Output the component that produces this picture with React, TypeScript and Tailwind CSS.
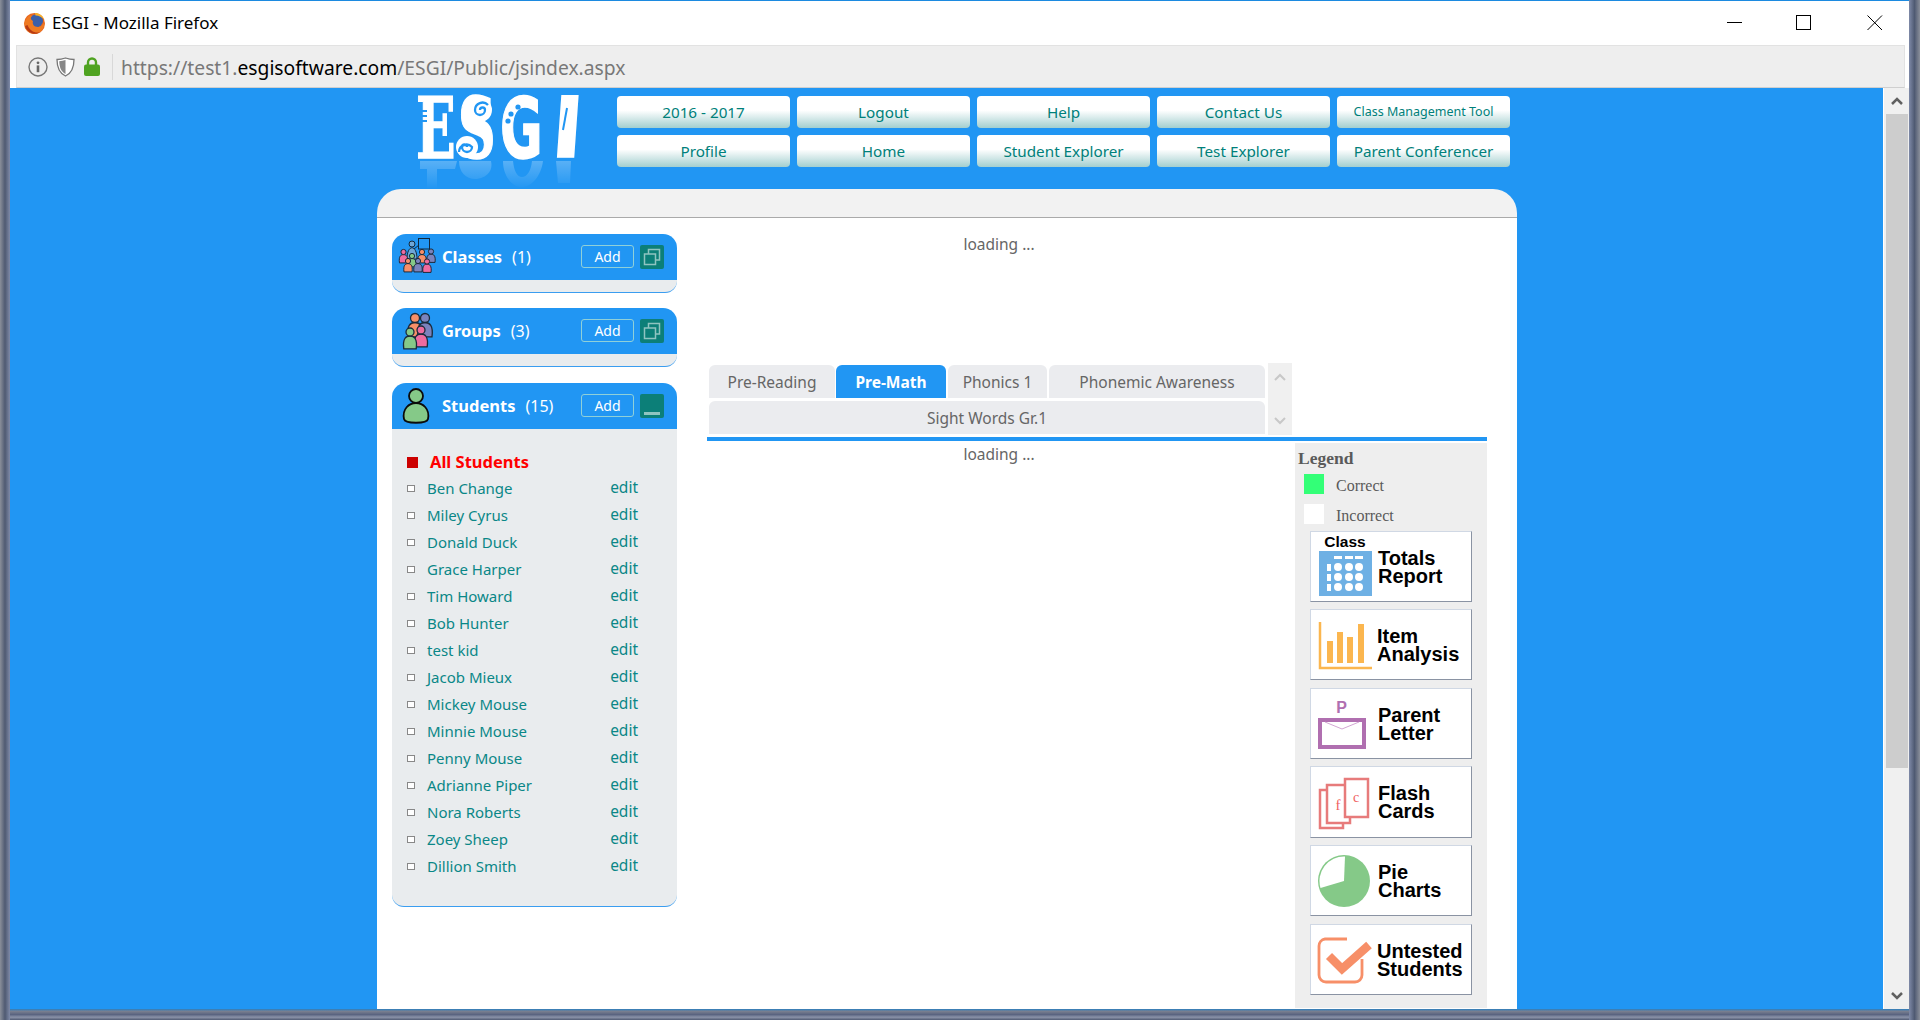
import React from "react";

const sans = "font-['Noto_Sans','Liberation_Sans',sans-serif]";

function Firefox() {
  return (
    <svg width="23" height="23" viewBox="0 0 23 23" className="shrink-0">
      <circle cx="11.500" cy="11.500" r="10.500" fill="#e8681f" />
      <ellipse cx="13" cy="9" rx="7" ry="6.500" fill="#3b5fa8" />
      <path d="M4 6 C6 3 8 3 9 4 C7 6 8 8 10 9 C9 12 11 15 15 15 C18 15 20 13 21.500 10 C22 16 17 22 11 22 C6 22 1.500 17 1.500 12 C1.500 10 2.500 8 4 6Z" fill="#ee7a22" />
      <path d="M2 14 C4 21 12 24 18 20 C12 22 7 19 4.500 13Z" fill="#b83a14" />
      <path d="M12 1 C16 1 20 3.500 21.500 8 C19 5 16 3.500 12.500 3.500Z" fill="#f7b02a" />
    </svg>
  );
}

function WindowControls() {
  return (
    <svg width="156" height="16" viewBox="0 0 156 16" className="shrink-0">
      <path d="M0 7.500H15" stroke="#000" strokeWidth="1" />
      <rect x="69.500" y="0.500" width="14" height="14" fill="none" stroke="#000" strokeWidth="1" />
      <path d="M140.500 0.500L155 15M155 0.500L140.500 15" stroke="#000" strokeWidth="1" />
    </svg>
  );
}

function InfoIcon() {
  return (
    <svg width="20" height="20" viewBox="0 0 20 20" className="shrink-0">
      <circle cx="10" cy="10" r="9" fill="none" stroke="#777" strokeWidth="1.400" />
      <circle cx="10" cy="5.800" r="1.400" fill="#666" />
      <rect x="8.700" y="8.400" width="2.600" height="6.800" fill="#666" />
    </svg>
  );
}

function ShieldIcon() {
  return (
    <svg width="19" height="20" viewBox="0 0 19 20" className="shrink-0">
      <path d="M9.500 1 C6.500 2 4 2.500 1 2.500 C1 10 3 16 9.500 19 C16 16 18 10 18 2.500 C15 2.500 12.500 2 9.500 1Z" fill="#fff" stroke="#777" strokeWidth="1.300" />
      <path d="M9.500 3 C7.500 3.700 5.500 4 3.200 4.200 C3.400 10 5 14.500 9.500 17Z" fill="#888" />
    </svg>
  );
}

function LockIcon() {
  return (
    <svg width="16" height="19" viewBox="0 0 16 19" className="shrink-0">
      <path d="M4 8V5.500A4 4 0 0 1 12 5.500V8" fill="none" stroke="#4fa321" strokeWidth="2.400" />
      <rect x="0" y="7.500" width="16" height="11.500" rx="2" fill="#4fa321" />
    </svg>
  );
}

function Logo() {
  return (
    <svg width="166" height="99" viewBox="0 0 166 99" className="shrink-0">
      <defs>
        <linearGradient id="logofade" gradientUnits="userSpaceOnUse" x1="0" y1="69" x2="0" y2="98">
          <stop offset="0" stopColor="#fff" stopOpacity="0.26" />
          <stop offset="1" stopColor="#fff" stopOpacity="0" />
        </linearGradient>
      </defs>
      <g fill="#fff" stroke="#fff" strokeWidth="1.500" fontWeight="700">
        <text transform="translate(1 67) scale(0.62 1)" fontSize="84" fontFamily="'DejaVu Serif',serif">E</text>
        <text transform="translate(43 67) scale(0.62 1)" fontSize="84" fontFamily="'DejaVu Serif',serif">S</text>
        <text transform="translate(85 67) scale(0.62 1)" fontSize="84" fontFamily="'DejaVu Sans',sans-serif">G</text>
        <text transform="translate(135 66) skewX(-4)" fontSize="84" fontFamily="'DejaVu Sans',sans-serif">I</text>
        <circle cx="65" cy="19" r="12" strokeWidth="0" />
        <circle cx="52" cy="56" r="11" strokeWidth="0" />
      </g>
      <g fill="url(#logofade)">
        <path d="M5 70H42L40 78H22V98H12V78H5Z" />
        <path d="M44 70H76C78 78 74 86 62 88C52 89 44 82 44 70Z" />
        <path d="M88 70H128C126 86 116 96 107 96C96 96 88 84 88 70ZM98 70C99 80 102 86 107 86C112 86 116 80 117 70Z" fillRule="evenodd" />
        <path d="M141 70H156L155 92H143Z" />
      </g>
      <path d="M3 20h9M3 25h9M3 30h9" stroke="#2196f3" strokeWidth="2" />
      <path d="M65 19a2.500 2.500 0 0 1 5 0a5 5 0 0 1 -10 0a7.500 7.500 0 0 1 13 -5" fill="none" stroke="#2196f3" strokeWidth="2.300" />
      <path d="M52 56a2.500 2.500 0 0 0 -5 0a5 5 0 0 0 10 0a7.500 7.500 0 0 0 -13 5" fill="none" stroke="#2196f3" strokeWidth="2.300" />
      <circle cx="103" cy="16" r="2.600" fill="#2196f3" />
      <circle cx="96" cy="23" r="2.600" fill="#2196f3" />
      <circle cx="93" cy="30" r="2.600" fill="#2196f3" />
      <path d="M152 17l-4 22" stroke="#2196f3" strokeWidth="2" />
    </svg>
  );
}

function Person({ x, y, r, fill, w }: { x: number; y: number; r: number; fill: string; w?: number }) {
  const sw = w ?? 1.300;
  return (
    <g stroke="#1b2a3a" strokeWidth={sw}>
      <path d={`M${x - r * 1.55} ${y + r * 4.2} C${x - r * 1.9} ${y + r * 1.6} ${x - r} ${y + r} ${x} ${y + r} C${x + r} ${y + r} ${x + r * 1.9} ${y + r * 1.6} ${x + r * 1.55} ${y + r * 4.2} Z`} fill={fill} />
      <circle cx={x} cy={y} r={r} fill={fill} />
    </g>
  );
}

function ClassesIcon() {
  return (
    <svg width="38" height="38" viewBox="0 0 38 38" className="shrink-0">
      <rect x="20.500" y="0.500" width="11" height="10.500" fill="none" stroke="#12283c" strokeWidth="1" />
      <path d="M16 11L21 7" stroke="#12283c" strokeWidth="1" />
      <circle cx="14" cy="6" r="3" fill="#6ea6d6" stroke="#12283c" strokeWidth="1" />
      <path d="M9 21C9 6 19 6 19 21Z" fill="#6ea6d6" stroke="#12283c" strokeWidth="1" />
      <Person x={5.500} y={14} r={2.600} fill="#ef6b9f" w={1} />
      <Person x={33} y={13.500} r={2.600} fill="#7b83bd" w={1} />
      <Person x={14} y={18} r={2.600} fill="#85c988" w={1} />
      <Person x={24} y={14} r={2.600} fill="#f78f68" w={1} />
      <Person x={10} y={23} r={2.600} fill="#f78f68" w={1} />
      <Person x={20} y={23} r={2.600} fill="#7b83bd" w={1} />
      <Person x={29} y={23.500} r={2.600} fill="#ef6b9f" w={1} />
    </svg>
  );
}

function GroupsIcon() {
  return (
    <svg width="38" height="38" viewBox="0 0 38 38" className="shrink-0">
      <Person x={17} y={6} r={4.500} fill="#f78f68" />
      <Person x={27} y={6} r={4.500} fill="#7b83bd" />
      <Person x={23} y={18} r={4} fill="#ef6b9f" />
      <Person x={12} y={20} r={4} fill="#85c988" />
    </svg>
  );
}

function StudentIcon() {
  return (
    <svg width="38" height="38" viewBox="0 0 38 38" className="shrink-0">
      <circle cx="18" cy="9" r="7" fill="#85c988" stroke="#0b0b0b" strokeWidth="1.800" />
      <path d="M6 32 C4 22 11 16 18 16 C25 16 32 22 30 32 C29 37 7 37 6 32Z" fill="#85c988" stroke="#0b0b0b" strokeWidth="1.800" />
    </svg>
  );
}

function CopyBtn() {
  return (
    <div className="w-[24px] h-[24px] rounded-[2px] bg-[#0c7f78] flex items-center justify-center shrink-0">
      <svg width="18" height="18" viewBox="0 0 18 18">
        <rect x="5.500" y="1.500" width="11" height="10.500" fill="none" stroke="#8fc4c0" strokeWidth="1.500" />
        <rect x="1.500" y="6" width="11" height="10.500" fill="#0c7f78" stroke="#8fc4c0" strokeWidth="1.500" />
      </svg>
    </div>
  );
}

function MinusBtn() {
  return (
    <div className="w-[24px] h-[24px] rounded-[2px] bg-[#0c7f78] flex items-end justify-center pb-[3px] shrink-0">
      <div className="w-[16px] h-[3px] bg-[#8fc4c0]" />
    </div>
  );
}

function PanelHeader({ icon, name, count, btn }: { icon: React.ReactNode; name: string; count: number; btn: React.ReactNode }) {
  return (
    <div className="h-[46px] bg-[#2196f3] rounded-t-[14px] flex items-center text-white">
      <div className="w-[50px] pl-[6px] shrink-0">{icon}</div>
      <span className={`${sans} text-[16.500px] font-bold leading-none`}>{name}</span>
      <span className={`${sans} text-[16px] leading-none ml-[10px]`}>({count})</span>
      <div className="flex-1" />
      <div className={`${sans} w-[53px] h-[23px] mb-[1px] rounded-[3px] border border-[#8fd0d8] flex items-center justify-center text-[14px] mr-[6px]`}>Add</div>
      <div className="mr-[13px]">{btn}</div>
    </div>
  );
}

function CollapsedPanel({ icon, name, count }: { icon: React.ReactNode; name: string; count: number }) {
  return (
    <div className="w-[285px]">
      <PanelHeader icon={icon} name={name} count={count} btn={<CopyBtn />} />
      <div className="h-[13px] bg-[#e9ecee] rounded-b-[12px] border-b border-[#3a9df0]" />
    </div>
  );
}

const students = [
  "Ben Change", "Miley Cyrus", "Donald Duck", "Grace Harper", "Tim Howard", "Bob Hunter", "test kid",
  "Jacob Mieux", "Mickey Mouse", "Minnie Mouse", "Penny Mouse", "Adrianne Piper", "Nora Roberts", "Zoey Sheep", "Dillion Smith",
];

function StudentsPanel() {
  return (
    <div className="w-[285px] mt-[1px]">
      <PanelHeader icon={<StudentIcon />} name="Students" count={15} btn={<MinusBtn />} />
      <div className="h-[478px] bg-[#e9ecee] rounded-b-[12px] border-b border-[#3a9df0] pt-[21px] pl-[15px] pr-[39px]">
        <div className="h-[25px] flex items-center">
          <div className="w-[11px] h-[11px] bg-[#cc0000] shrink-0" />
          <span className={`${sans} text-[16.500px] font-bold text-[#ff0000] ml-[12px] leading-none`}>All Students</span>
        </div>
        {students.map((s) => (
          <div key={s} className="h-[27px] flex items-center">
            <div className="w-[8px] h-[7px] bg-white border border-[#888] shrink-0" />
            <span className={`${sans} text-[15px] text-[#0a8787] ml-[12px] flex-1 leading-none`}>{s}</span>
            <span className={`${sans} text-[15.500px] text-[#0a8787] leading-none mb-[2px]`}>edit</span>
          </div>
        ))}
      </div>
    </div>
  );
}

function Tab({ w, label, active }: { w: string; label: string; active?: boolean }) {
  return (
    <div className={`${w} h-[33px] rounded-t-[6px] flex items-center justify-center pt-[3px] ${sans} text-[15.500px] ${active ? "bg-[#2196f3] text-white font-bold" : "bg-[#ebecef] text-[#666]"}`}>
      {label}
    </div>
  );
}

function ReportCard({ h, mb, icon, l1, l2, gap }: { h: string; mb: string; icon: React.ReactNode; l1: string; l2: string; gap: string }) {
  return (
    <div className={`${h} ${mb} w-[162px] bg-white border border-t-[#d0d8e4] border-l-[#d0d8e4] border-r-[#8a93a3] border-b-[#8a93a3] flex items-center pl-[4px]`}>
      {icon}
      <div className={`${gap} font-['Liberation_Sans',sans-serif] font-bold text-[20px] leading-[18px] text-black`}>
        <div>{l1}</div>
        <div>{l2}</div>
      </div>
    </div>
  );
}

function TotalsIcon() {
  const dots: React.ReactNode[] = [];
  [23, 34, 44].forEach((x) => [35, 45, 55].forEach((y) => dots.push(<circle key={`${x}-${y}`} cx={x} cy={y} r="4" fill="#fff" />)));
  return (
    <svg width="60" height="69" viewBox="0 0 60 69" className="shrink-0">
      <text x="30" y="15" textAnchor="middle" fontFamily="'Liberation Sans',sans-serif" fontWeight="700" fontSize="15.500" fill="#000">Class</text>
      <rect x="4" y="19" width="53" height="45" fill="#6eb0e4" />
      <rect x="19" y="24" width="8" height="3" fill="#fff" />
      <rect x="30" y="24" width="8" height="3" fill="#fff" />
      <rect x="40" y="24" width="8" height="3" fill="#fff" />
      <rect x="12" y="32" width="4" height="7" fill="#fff" />
      <rect x="12" y="42" width="4" height="7" fill="#fff" />
      <rect x="12" y="52" width="4" height="7" fill="#fff" />
      {dots}
    </svg>
  );
}

function ItemIcon() {
  return (
    <svg width="60" height="69" viewBox="0 0 60 69" className="shrink-0">
      <path d="M5 12V58H57" fill="none" stroke="#fbb64f" strokeWidth="2.500" />
      <rect x="12" y="31" width="6" height="22" fill="#fbb64f" />
      <rect x="22" y="22" width="6" height="31" fill="#fbb64f" />
      <rect x="32" y="27" width="6" height="26" fill="#fbb64f" />
      <rect x="43" y="14" width="6" height="39" fill="#fbb64f" />
    </svg>
  );
}

function LetterIcon() {
  return (
    <svg width="60" height="69" viewBox="0 0 60 69" className="shrink-0">
      <text x="26.500" y="24" textAnchor="middle" fontFamily="'Liberation Sans',sans-serif" fontWeight="700" fontSize="16" fill="#b06fb0">P</text>
      <rect x="5" y="31" width="44" height="27" fill="#fff" stroke="#b06fb0" strokeWidth="4" />
      <path d="M10 33L27 40L44 33" fill="none" stroke="#c88fc8" strokeWidth="0.800" />
    </svg>
  );
}

function FlashIcon() {
  return (
    <svg width="60" height="69" viewBox="0 0 60 69" className="shrink-0">
      <g fill="#fff" stroke="#e77b7b" strokeWidth="2.500">
        <rect x="5" y="22" width="23" height="38" />
        <rect x="12" y="17" width="23" height="38" />
        <rect x="30" y="11" width="23" height="38" />
      </g>
      <text x="23" y="42" textAnchor="middle" fontFamily="'Liberation Serif',serif" fontSize="15" fill="#f06060">f</text>
      <text x="41" y="34" textAnchor="middle" fontFamily="'Liberation Serif',serif" fontSize="14" fill="#f06060">c</text>
    </svg>
  );
}

function PieIcon() {
  return (
    <svg width="60" height="69" viewBox="0 0 60 69" className="shrink-0">
      <circle cx="29" cy="35" r="26" fill="#85c988" />
      <path d="M29 35L30 10.500A24.500 24.500 0 0 0 5.500 42Z" fill="#fff" />
    </svg>
  );
}

function CheckIcon() {
  return (
    <svg width="60" height="69" viewBox="0 0 60 69" className="shrink-0">
      <path d="M32 14H10A7 7 0 0 0 4 21V50A7 7 0 0 0 11 57H40A7 7 0 0 0 47 50V34" fill="none" stroke="#f78f68" strokeWidth="2.800" />
      <path d="M14 31L27 44L54 20" fill="none" stroke="#f78f68" strokeWidth="8.500" />
    </svg>
  );
}

function Legend() {
  return (
    <div className="w-[192px] mt-[2px] bg-[#eeeeee] shrink-0 h-[565px] pl-[3px]">
      <div className="font-['Liberation_Serif',serif] font-bold text-[17.500px] text-[#5a5a5a] leading-[18px] mt-[5px] pt-[1px] h-[18px]">Legend</div>
      <div className="flex items-center h-[20px] mt-[8px] ml-[6px]">
        <div className="w-[20px] h-[20px] bg-[#33ff77] shrink-0" />
        <span className="ml-[12px] mt-[3px] font-['Liberation_Serif',serif] text-[16px] leading-none text-[#5a5a5a]">Correct</span>
      </div>
      <div className="flex items-center h-[20px] mt-[10px] ml-[6px]">
        <div className="w-[20px] h-[20px] bg-white shrink-0" />
        <span className="ml-[12px] mt-[3px] font-['Liberation_Serif',serif] text-[16px] leading-none text-[#5a5a5a]">Incorrect</span>
      </div>
      <div className="ml-[12px] mt-[7px]">
        <ReportCard h="h-[71px]" mb="mb-[7px]" icon={<TotalsIcon />} l1="Totals" l2="Report" gap="ml-[3px]" />
        <ReportCard h="h-[71px]" mb="mb-[8px]" icon={<ItemIcon />} l1="Item" l2="Analysis" gap="ml-[2px]" />
        <ReportCard h="h-[71px]" mb="mb-[7px]" icon={<LetterIcon />} l1="Parent" l2="Letter" gap="ml-[3px]" />
        <ReportCard h="h-[72px]" mb="mb-[7px]" icon={<FlashIcon />} l1="Flash" l2="Cards" gap="ml-[3px]" />
        <ReportCard h="h-[71px]" mb="mb-[8px]" icon={<PieIcon />} l1="Pie" l2="Charts" gap="ml-[3px]" />
        <ReportCard h="h-[71px]" mb="mb-0" icon={<CheckIcon />} l1="Untested" l2="Students" gap="ml-[2px]" />
      </div>
    </div>
  );
}

const topButtons = ["2016 - 2017", "Logout", "Help", "Contact Us", "Class Management Tool", "Profile", "Home", "Student Explorer", "Test Explorer", "Parent Conferencer"];

function NavButton({ label }: { label: string }) {
  const small = label === "Class Management Tool";
  return (
    <div className={`h-[32px] rounded-[4px] bg-[linear-gradient(to_bottom,#ffffff_0%,#ffffff_45%,#a3cfcf_100%)] flex items-center justify-center text-[#00807a] ${sans} ${small ? "text-[12.500px]" : "text-[15.250px]"}`}>
      {label}
    </div>
  );
}

function Scrollbar() {
  return (
    <div className="w-[26px] shrink-0 bg-[#f0f0f0] flex flex-col items-center border-l border-white">
      <div className="h-[26px] flex items-center justify-center">
        <svg width="12" height="8" viewBox="0 0 12 8"><path d="M1 7L6 2L11 7" fill="none" stroke="#606060" strokeWidth="2.500" /></svg>
      </div>
      <div className="w-[22px] h-[654px] bg-[#cdcdcd]" />
      <div className="flex-1" />
      <div className="h-[26px] flex items-center justify-center">
        <svg width="12" height="8" viewBox="0 0 12 8"><path d="M1 1L6 6L11 1" fill="none" stroke="#606060" strokeWidth="2.500" /></svg>
      </div>
    </div>
  );
}

export default function App() {
  return (
    <div className="w-[1920px] h-[1020px] overflow-hidden flex bg-[#606a80]">
      <div className="w-[10px] shrink-0 bg-[linear-gradient(to_right,#8a8f9a,#4f5a72,#7f8aa8)]" />
      <div className="w-[1899px] shrink-0 flex flex-col">
        <div className="h-[1px] bg-[#1c8ae0] shrink-0" />
        <div className="h-[44px] bg-white shrink-0 flex items-center pl-[13px] pr-[26px]">
          <Firefox />
          <span className={`ml-[6px] ${sans} text-[17px] text-black flex-1`}>ESGI - Mozilla Firefox</span>
          <WindowControls />
        </div>
        <div className="h-[43px] bg-white shrink-0 pl-[6px] pr-[4px]">
          <div className="h-[43px] bg-[#eeeeee] border border-[#e2e2e2] border-b-[#cfcfcf] flex items-center pl-[11px]">
            <InfoIcon />
            <div className="ml-[8px]"><ShieldIcon /></div>
            <div className="ml-[9px]"><LockIcon /></div>
            <div className="w-px h-[26px] bg-[#d8d8d8] ml-[12px]" />
            <div className={`ml-[8px] pt-[3px] ${sans} text-[19.250px] text-[#787878] whitespace-nowrap`}>
              https://test1.<span className="text-black">esgisoftware.com</span>/ESGI/Public/jsindex.aspx
            </div>
          </div>
        </div>
        <div className="flex flex-1 min-h-0">
          <div className="flex-1 bg-[#2196f3] overflow-hidden pl-[367px]">
            <div className="w-[1140px]">
              <div className="h-[101px] flex">
                <div className="w-[240px] pl-[38px] pt-[3px] shrink-0 h-[101px]"><Logo /></div>
                <div className="w-[893px] grid grid-cols-5 gap-x-[7px] gap-y-[7px] pt-[8px] content-start">
                  {topButtons.map((b) => <NavButton key={b} label={b} />)}
                </div>
              </div>
              <div className="h-[29px] bg-[#f2f2f2] rounded-t-[24px] border-b border-[#aaaaaa]" />
              <div className="h-[791px] bg-white flex">
                <div className="w-[330px] pl-[15px] pt-[16px] shrink-0 flex flex-col gap-[15px]">
                  <CollapsedPanel icon={<ClassesIcon />} name="Classes" count={1} />
                  <CollapsedPanel icon={<GroupsIcon />} name="Groups" count={3} />
                  <StudentsPanel />
                </div>
                <div className="w-[780px] shrink-0">
                  <div className={`h-[145px] pt-[15px] text-center pr-[196px] ${sans} text-[15.500px] text-[#666] leading-[22px]`}>loading ...</div>
                  <div className="flex items-start pl-[2px]">
                    <div className="w-[556px] pt-[2px] flex flex-col gap-[3px]">
                      <div className="flex gap-[1px]">
                        <Tab w="w-[126px]" label="Pre-Reading" />
                        <Tab w="w-[110px] mr-[1px]" label="Pre-Math" active />
                        <Tab w="w-[99px] mr-[1px]" label="Phonics 1" />
                        <Tab w="flex-1" label="Phonemic Awareness" />
                      </div>
                      <Tab w="w-full" label="Sight Words Gr.1" />
                    </div>
                    <div className="w-[24px] h-[72px] ml-[3px] bg-[#f0f0f0] flex flex-col items-center justify-between py-[10px]">
                      <svg width="12" height="8" viewBox="0 0 12 8"><path d="M1 7L6 2L11 7" fill="none" stroke="#c8c8c8" strokeWidth="2" /></svg>
                      <svg width="12" height="8" viewBox="0 0 12 8"><path d="M1 1L6 6L11 1" fill="none" stroke="#c8c8c8" strokeWidth="2" /></svg>
                    </div>
                  </div>
                  <div className="h-[4px] bg-[#2196f3] mt-[2px]" />
                  <div className="flex">
                    <div className={`flex-1 text-center pr-[4px] pt-[2px] ${sans} text-[15.500px] text-[#666] leading-[22px]`}>loading ...</div>
                    <Legend />
                  </div>
                </div>
              </div>
            </div>
          </div>
          <Scrollbar />
        </div>
        <div className="h-[11px] shrink-0 bg-[linear-gradient(to_bottom,#2a7fc0_0%,#7a8090_20%,#5a6480_50%,#8a92a8_75%,#4f5a72_100%)]" />
      </div>
      <div className="flex-1 bg-[linear-gradient(to_right,#7f8aa8,#4f5a72,#8a8f9a)]" />
    </div>
  );
}
